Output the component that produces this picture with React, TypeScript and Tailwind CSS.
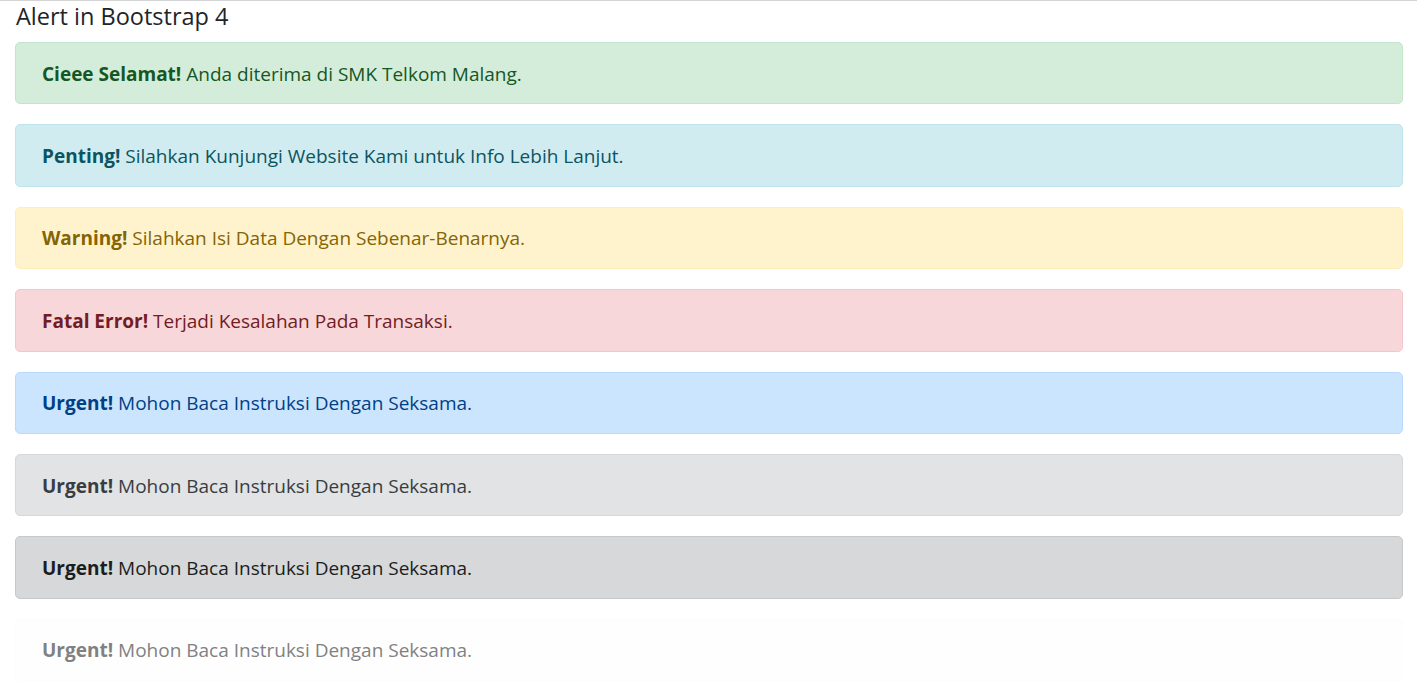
const alerts = [
  { strong: 'Cieee Selamat!', text: 'Anda diterima di SMK Telkom Malang.', box: 'bg-[#d4edda] border-[#c3e6cb] text-[#155724]' },
  { strong: 'Penting!', text: 'Silahkan Kunjungi Website Kami untuk Info Lebih Lanjut.', box: 'bg-[#d1ecf1] border-[#bee5eb] text-[#0c5460]' },
  { strong: 'Warning!', text: 'Silahkan Isi Data Dengan Sebenar-Benarnya.', box: 'bg-[#fff3cd] border-[#ffeeba] text-[#856404]' },
  { strong: 'Fatal Error!', text: 'Terjadi Kesalahan Pada Transaksi.', box: 'bg-[#f8d7da] border-[#f5c6cb] text-[#721c24]' },
  { strong: 'Urgent!', text: 'Mohon Baca Instruksi Dengan Seksama.', box: 'bg-[#cce5ff] border-[#b8daff] text-[#004085]' },
  { strong: 'Urgent!', text: 'Mohon Baca Instruksi Dengan Seksama.', box: 'bg-[#e2e3e5] border-[#d6d8db] text-[#383d41]' },
  { strong: 'Urgent!', text: 'Mohon Baca Instruksi Dengan Seksama.', box: 'bg-[#d6d8d9] border-[#c6c8ca] text-[#1b1e21]' },
  { strong: 'Urgent!', text: 'Mohon Baca Instruksi Dengan Seksama.', box: 'bg-[#fefefe] border-[#fdfdfe] text-[#818182]' },
];

export default function App() {
  return (
    <div className="min-h-screen bg-white border-t border-[#d4d4d4] font-['Open_Sans',sans-serif] text-[#212529]">
      <div className="pl-[15px] pr-[14px]">
        <h4 className="text-[23.5px] leading-[31px] font-normal mb-[10px] pl-[1px]">Alert in Bootstrap 4</h4>
        {alerts.map((a, i) => (
          <div key={i} className={`border rounded-[5px] px-[26px] pt-[15.7px] pb-[14.7px] mb-[20px] text-[19px] leading-[30px] ${a.box}`}>
            <strong className="font-bold">{a.strong}</strong> {a.text}
          </div>
        ))}
      </div>
    </div>
  );
}
